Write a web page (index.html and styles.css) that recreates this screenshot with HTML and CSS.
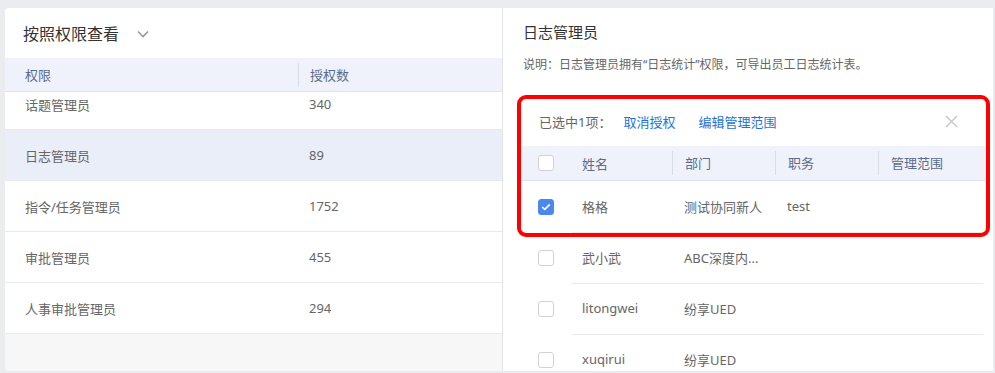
FILE: index.html
```html
<!DOCTYPE html>
<html lang="zh-CN">
<head>
  <meta charset="UTF-8" />
  <title>权限管理</title>
  <link rel="stylesheet" href="styles.css">
</head>
<body>
<div class="page">
  <div class="card">
    <div class="card-head">
      <span class="card-title">按照权限查看</span>
      <svg class="chevron" width="12" height="8" viewBox="0 0 12 8"><path d="M1 1.5 L6 6.5 L11 1.5" fill="none" stroke="#9a9a9a" stroke-width="1.6"/></svg>
    </div>
    <div class="ptable">
      <div class="prow phead">
        <div class="pcell">权限</div>
        <div class="pcell divided">授权数</div>
      </div>
      <div class="pbody">
        <div class="prow first">
          <div class="pcell">话题管理员</div>
          <div class="pcell">340</div>
        </div>
        <div class="prow active">
          <div class="pcell">日志管理员</div>
          <div class="pcell">89</div>
        </div>
        <div class="prow">
          <div class="pcell">指令/任务管理员</div>
          <div class="pcell">1752</div>
        </div>
        <div class="prow">
          <div class="pcell">审批管理员</div>
          <div class="pcell">455</div>
        </div>
        <div class="prow">
          <div class="pcell">人事审批管理员</div>
          <div class="pcell">294</div>
        </div>
      </div>
      <div class="pfill"></div>
    </div>
  </div>

  <div class="detail">
    <h2 class="detail-title">日志管理员</h2>
    <p class="detail-desc">说明：日志管理员拥有“日志统计”权限，可导出员工日志统计表。</p>

    <div class="members">
      <div class="toolbar">
        <span class="count">已选中1项：</span>
        <a class="link">取消授权</a>
        <a class="link">编辑管理范围</a>
        <svg class="close" width="13" height="13" viewBox="0 0 13 13"><path d="M1 1 L12 12 M12 1 L1 12" stroke="#c4c4c4" stroke-width="1.4"/></svg>
      </div>
      <div class="mrow mhead">
        <div class="mcell check"><span class="box"></span></div>
        <div class="mcell">姓名</div>
        <div class="mcell divided">部门</div>
        <div class="mcell divided">职务</div>
        <div class="mcell divided">管理范围</div>
      </div>
      <div class="mrow">
        <div class="mcell check"><span class="box checked"><svg width="10" height="8" viewBox="0 0 10 8"><path d="M1.2 4 L3.8 6.4 L8.8 1.4" fill="none" stroke="#fff" stroke-width="1.7"/></svg></span></div>
        <div class="mcell">格格</div>
        <div class="mcell">测试协同新人</div>
        <div class="mcell">test</div>
        <div class="mcell"></div>
      </div>
      <div class="mrow">
        <div class="mcell check"><span class="box"></span></div>
        <div class="mcell">武小武</div>
        <div class="mcell">ABC深度内...</div>
        <div class="mcell"></div>
        <div class="mcell"></div>
      </div>
      <div class="mrow">
        <div class="mcell check"><span class="box"></span></div>
        <div class="mcell">litongwei</div>
        <div class="mcell">纷享UED</div>
        <div class="mcell"></div>
        <div class="mcell"></div>
      </div>
      <div class="mrow">
        <div class="mcell check"><span class="box"></span></div>
        <div class="mcell">xuqirui</div>
        <div class="mcell">纷享UED</div>
        <div class="mcell"></div>
        <div class="mcell"></div>
      </div>
    </div>

    <div class="highlight"></div>
  </div>
</div>
</body>
</html>
```

FILE: styles.css
```css
body {
  margin: 0;
  height: 373px;
  overflow: hidden;
  background-color: #ebecf0;
  font-family: "Noto Sans", "Noto Sans CJK SC", sans-serif;
  color: #333;
}

.page {
  display: flex;
  padding: 8px 0 0 5px;
  height: 363px;
}

/* left card */
.card {
  width: 497px;
  background: #fff;
  border-radius: 4px 0 0 4px;
  display: flex;
  flex-direction: column;
  overflow: hidden;
}

.card-head {
  height: 50px;
  display: flex;
  align-items: center;
  padding-left: 18px;
  gap: 18px;
}

.card-title {
  font-size: 16px;
  color: #333;
}

.chevron {
  margin-top: 1px;
}

.ptable {
  flex: 1;
  display: flex;
  flex-direction: column;
}

.prow {
  display: grid;
  grid-template-columns: 293px 1fr;
  align-items: center;
  height: 50px;
  border-bottom: 1px solid #e9e9ec;
  font-size: 13px;
  color: #666;
}

.pcell {
  padding-left: 20px;
}

.pcell + .pcell {
  padding-left: 11px;
}

.phead {
  height: 33px;
  background: #eff2fa;
  border-bottom: 1px solid #dde3f3;
  color: #5b6b8f;
  position: relative;
  z-index: 1;
}

.divided {
  border-left: 1px solid #d9dde8;
  line-height: 24px;
}

.pbody {
  overflow: hidden;
}

.prow.first {
  margin-top: -13px;
}

.prow.active {
  background: #eaeef8;
}

.pfill {
  flex: 1;
  background: #f7f7f8;
}

/* right panel */
.detail {
  position: relative;
  width: 490px;
  margin-left: 1px;
  background: #fff;
  box-shadow: -1px 0 0 #e2e3e6;
}

.detail-title {
  margin: 0;
  padding: 13px 0 0 20px;
  font-size: 15px;
  font-weight: 400;
  line-height: 22px;
  color: #333;
}

.detail-desc {
  margin: 13px 0 0 20px;
  font-size: 12px;
  line-height: 18px;
  color: #666;
}

.members {
  margin: 22px 7px 0 18px;
}

.toolbar {
  height: 50px;
  display: flex;
  align-items: center;
  padding-left: 18px;
  font-size: 13px;
}

.count {
  color: #666;
  margin-right: 12px;
}

.link {
  color: #1f72d8;
  margin-right: 23px;
  cursor: pointer;
}

.close {
  margin-left: auto;
  margin-right: 28px;
}

.mrow {
  display: grid;
  grid-template-columns: 51px 100px 103px 103px 1fr;
  align-items: center;
  height: 51px;
  font-size: 13px;
  color: #666;
}

.mrow .mcell:not(.check) {
  height: 100%;
  display: flex;
  align-items: center;
  padding-left: 12px;
  border-bottom: 1px solid #e9e9ec;
}

.mrow .mcell:nth-child(2) {
  padding-left: 10px;
}

.mrow .mcell:last-child {
  margin-right: 3px;
}

.mcell.check {
  padding-left: 17px;
  display: flex;
}

.mhead {
  height: 34px;
  background: #eff2fa;
  border-bottom: 1px solid #dde3f3;
  color: #5b6b8f;
}

.mhead .mcell:not(.check) {
  border-bottom: none;
}

.mhead .mcell.divided {
  height: 24px;
  border-left: 1px solid #d9dde8;
}

.box {
  width: 14px;
  height: 14px;
  border: 1px solid #d2d2d6;
  border-radius: 3px;
  background: #fff;
  display: flex;
  align-items: center;
  justify-content: center;
}

.box.checked {
  background: #4a87ef;
  border-color: #4a87ef;
}

.highlight {
  position: absolute;
  left: 14px;
  top: 87px;
  width: 465px;
  height: 134px;
  border: 4px solid #ff0000;
  border-radius: 9px;
}
```
